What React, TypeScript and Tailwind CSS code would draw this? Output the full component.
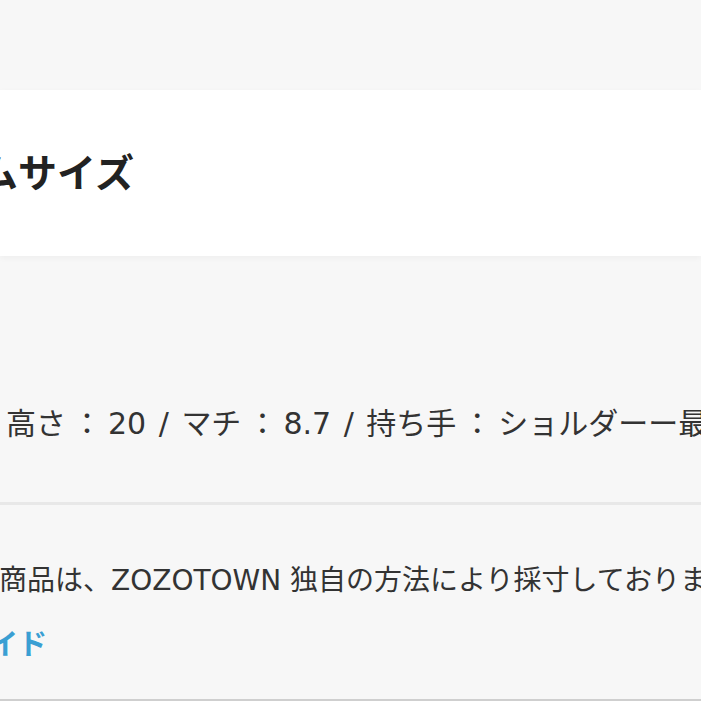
import React from 'react';

// Latin from DejaVu (wide, like the system UI font), kana/kanji from Noto CJK
const jp = "font-['DejaVu_Sans','Noto_Sans_CJK_JP',sans-serif]";

const Colon = () => <span className="mx-[6px]">：</span>;
const Slash = () => <span className="mx-[3px]"> / </span>;

const App: React.FC = () => {
  return (
    <div className={`w-[701px] h-[701px] overflow-hidden bg-[#f7f7f7] flex flex-col ${jp}`}>
      {/* Section title card */}
      <div className="mt-[90px] h-[166px] bg-white shadow-[0_2px_6px_rgba(0,0,0,0.04)] flex items-center flex-shrink-0">
        <h2 className="-ml-[134px] whitespace-nowrap text-[39px] font-bold leading-none text-[#222]">
          アイテムサイズ
        </h2>
      </div>

      {/* Measurements */}
      <div className="h-[246px] flex items-end pb-[63px] flex-shrink-0">
        <p className="ml-[6px] whitespace-nowrap text-[30px] leading-none text-[#333]">
          高さ<Colon />20<Slash />マチ<Colon />8.7<Slash />持ち手<Colon />ショルダーー最大 120cm
        </p>
      </div>

      <div className="h-[3px] bg-[#e8e8e8] flex-shrink-0" />

      {/* Note + guide link */}
      <div className="flex-1 flex flex-col border-b-2 border-[#cfcfcf]">
        <p className="mt-[62px] -ml-[57px] whitespace-nowrap text-[28px] leading-none text-[#333]">
          この商品は、ZOZOTOWN 独自の方法により採寸しております。
        </p>
        <a className="mt-[36px] -ml-[126px] whitespace-nowrap text-[29px] font-bold leading-none text-[#3a9fd3]">
          サイズガイド
        </a>
      </div>
    </div>
  );
};

export default App;
